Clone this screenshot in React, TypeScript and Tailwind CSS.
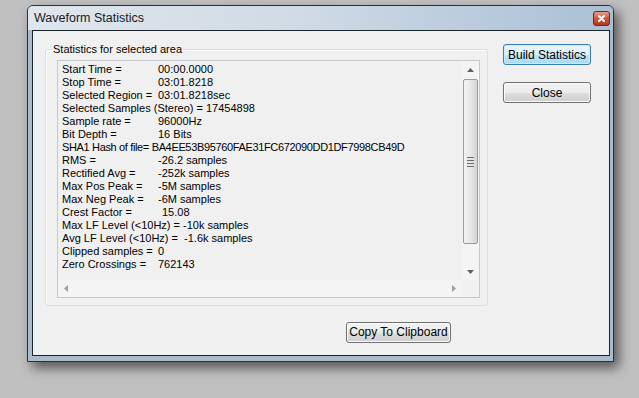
import React from 'react';

type Row = { label?: string; value?: string; full?: string; shift?: boolean; tight?: boolean };

const rows: Row[] = [
    { label: 'Start Time =', value: '00:00.0000' },
    { label: 'Stop Time =', value: '03:01.8218' },
    { label: 'Selected Region =', value: '03:01.8218sec' },
    { full: 'Selected Samples (Stereo) = 17454898' },
    { label: 'Sample rate =', value: '96000Hz' },
    { label: 'Bit Depth =', value: '16 Bits' },
    { full: 'SHA1 Hash of file= BA4EE53B95760FAE31FC672090DD1DF7998CB49D', tight: true },
    { label: 'RMS =', value: '-26.2 samples' },
    { label: 'Rectified Avg =', value: '-252k samples' },
    { label: 'Max Pos Peak =', value: '-5M samples' },
    { label: 'Max Neg Peak =', value: '-6M samples' },
    { label: 'Crest Factor =', value: '15.08', shift: true },
    { full: 'Max LF Level (<10Hz) = -10k samples' },
    { full: 'Avg LF Level (<10Hz) =  -1.6k samples' },
    { label: 'Clipped samples =', value: '0' },
    { label: 'Zero Crossings =', value: '762143' },
];

const WinButton: React.FC<{ label: string; primary?: boolean; className?: string }> = ({
    label,
    primary,
    className = '',
}) => (
    <button
        className={`h-[21px] rounded-[3px] border text-[12px] leading-none text-black ${
            primary
                ? 'border-[#3c7fb1] bg-[linear-gradient(#eaf6fd_0%,#d9f0fc_50%,#bee6fd_51%,#a7d9f5_100%)] shadow-[inset_0_0_0_1px_#c9ecfd]'
                : 'border-[#707070] bg-[linear-gradient(#f2f2f2_0%,#ebebeb_50%,#dddddd_51%,#cfcfcf_100%)] shadow-[inset_0_0_0_1px_#fbfbfb]'
        } ${className}`}
    >
        {label}
    </button>
);

const StatsList: React.FC = () => (
    <div className="flex h-[238px] w-[423px] flex-col border border-[#c5c9cf] bg-[#f0f0f0]">
        <div className="flex min-h-0 flex-1">
            {/* text area */}
            <div className="flex-1 overflow-hidden pl-[4px] pt-[2px] text-[11px] leading-[13px] text-black">
                {rows.map((r, i) => (
                    <div key={i} className="flex whitespace-pre">
                        {r.full ? (
                            <span className={r.tight ? 'tracking-[-0.35px]' : ''}>{r.full}</span>
                        ) : (
                            <>
                                <span className="w-[96px] shrink-0">{r.label}</span>
                                <span className={r.shift ? 'pl-[4px]' : ''}>{r.value}</span>
                            </>
                        )}
                    </div>
                ))}
            </div>
            {/* vertical scrollbar */}
            <div className="flex w-[17px] flex-col items-center bg-[#f4f4f4]">
                <div className="flex h-[17px] w-full items-center justify-center">
                    <svg width="7" height="4" viewBox="0 0 7 4">
                        <path d="M0 4 L3.5 0 L7 4 Z" fill="#606060" />
                    </svg>
                </div>
                <div className="mt-[1px] flex h-[165px] w-[15px] items-center justify-center rounded-[2px] border border-[#9a9a9a] bg-[linear-gradient(90deg,#f3f3f3,#e6e6e6_55%,#d4d4d4)]">
                    <div className="flex flex-col gap-[2px]">
                        <div className="h-[1px] w-[7px] bg-[#6a6a6a]" />
                        <div className="h-[1px] w-[7px] bg-[#6a6a6a]" />
                        <div className="h-[1px] w-[7px] bg-[#6a6a6a]" />
                        <div className="h-[1px] w-[7px] bg-[#6a6a6a]" />
                    </div>
                </div>
                <div className="flex-1" />
                <div className="flex h-[17px] w-full items-center justify-center">
                    <svg width="7" height="4" viewBox="0 0 7 4">
                        <path d="M0 0 L3.5 4 L7 0 Z" fill="#606060" />
                    </svg>
                </div>
            </div>
        </div>
        {/* horizontal scrollbar */}
        <div className="flex h-[17px]">
            <div className="flex flex-1 items-center justify-between bg-[#f4f4f4] px-[6px]">
                <svg width="4" height="7" viewBox="0 0 4 7">
                    <path d="M4 0 L0 3.5 L4 7 Z" fill="#a0a0a0" />
                </svg>
                <svg width="4" height="7" viewBox="0 0 4 7">
                    <path d="M0 0 L4 3.5 L0 7 Z" fill="#a0a0a0" />
                </svg>
            </div>
            <div className="w-[17px] bg-[#f0f0f0]" />
        </div>
    </div>
);

export default function App() {
    return (
        <div
            className="h-[398px] w-[639px] overflow-hidden bg-[#c0c0c0] pl-[27px] pt-[5px]"
            style={{ fontFamily: '"Liberation Sans", Arial, sans-serif' }}
        >
            <div className="flex h-[357px] w-[587px] flex-col rounded-t-[6px] border border-[#27323c] bg-[#aabccc] shadow-[5px_6px_12px_rgba(0,0,0,0.55)]">
                {/* title bar */}
                <div className="flex h-[24px] shrink-0 items-center justify-between rounded-t-[5px] bg-[linear-gradient(90deg,#dfe6ed_0%,#d0dbe6_45%,#aabfd6_100%)] pl-[6px] pr-[3px]">
                    <span className="text-[12.5px] text-[#1a1a1a]">Waveform Statistics</span>
                    <div className="flex h-[15px] w-[17px] items-center justify-center rounded-[3px] border border-[#6b2a1e] bg-[linear-gradient(#e8a08a,#cc5a3e_50%,#b8361c)]">
                        <svg width="7" height="7" viewBox="0 0 7 7">
                            <path d="M1 1 L6 6 M6 1 L1 6" stroke="#fff" strokeWidth="2" strokeLinecap="round" />
                        </svg>
                    </div>
                </div>
                {/* client area */}
                <div className="mb-[5px] ml-[4px] mr-[3px] flex-1 border border-[#1b232b] bg-[#f0f0f0]">
                    <div className="flex items-start">
                        <fieldset className="ml-[12px] mt-[12px] h-[263px] w-[443px] rounded-[3px] border border-[#d5dfe5] shadow-[inset_1px_1px_0_#fff]">
                            <legend className="ml-[6px] px-[1px] text-[11px] leading-[13px] text-black">
                                Statistics for selected area
                            </legend>
                            <div className="ml-[11px] mt-[4px]">
                                <StatsList />
                            </div>
                        </fieldset>
                        <div className="ml-[15px] mt-[13px] flex flex-col gap-[17px]">
                            <WinButton label="Build Statistics" primary className="w-[88px]" />
                            <WinButton label="Close" className="w-[88px]" />
                        </div>
                    </div>
                    <div className="ml-[313px] mt-[13px]">
                        <WinButton label="Copy To Clipboard" className="w-[105px]" />
                    </div>
                </div>
            </div>
        </div>
    );
}
